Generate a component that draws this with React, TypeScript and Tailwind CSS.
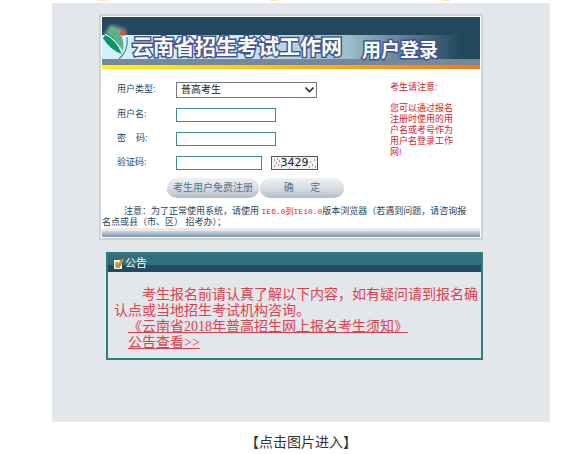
import React from "react";

const fieldClass =
  "h-[14px] border border-[#3f8a8a] bg-white px-1 text-[9px] leading-3 outline-none";
const labelClass = "w-[59px] whitespace-pre text-[#1d4560]";
const buttonClass =
  "h-5 rounded-full border-b border-[#b3bcc5] bg-linear-to-b from-[#eef1f4] via-[#d9dfe4] to-[#b9c2ca] text-[10px] leading-4 text-[#4d7391] whitespace-pre";
const bannerText =
  "font-bold text-[#fbfdf4] [-webkit-text-stroke:3px_#40539a] [paint-order:stroke_fill]";

function Logo() {
  return (
    <svg className="absolute left-0 top-[6px]" width="30" height="38" viewBox="0 0 30 38">
      <defs>
        <filter id="glow" x="-50%" y="-50%" width="200%" height="200%">
          <feGaussianBlur stdDeviation="2" />
        </filter>
      </defs>
      <path d="M2 12 L9 2 L24 7 L22 16 Z" fill="#fff" opacity="0.5" filter="url(#glow)" />
      <path d="M9 3 Q17 8 20 14 Q22 20 21 28 Q14 16 5 10Z" fill="#5fb088" />
      <path d="M1 15 L5 10 Q17 17 20 31 Q8 27 1 15Z" fill="#0a9468" />
      <path d="M3 11 Q15 17 20 30" fill="none" stroke="#e3f4ea" strokeWidth="1.2" />
      <path d="M25 14 Q27 27 17 36" fill="none" stroke="#4b8f93" strokeWidth="1.2" />
      <circle cx="21" cy="10" r="2.8" fill="#d9513a" />
    </svg>
  );
}

function Captcha() {
  return (
    <div className="relative ml-[9px] h-[14px] w-[47px] overflow-hidden border border-[#555] bg-[#f3f3f3] text-center font-['DejaVu_Sans',sans-serif] text-[11px] leading-3 text-[#222]">
      <svg className="absolute inset-0" width="45" height="12" viewBox="0 0 45 12">
        <path
          d="M2 3h1M5 2h1M4 6h1M7 4h1M2 9h1M6 8h1M9 10h1M11 2h1M17 11h1M20 1h1M25 10h1M38 5h1M40 8h1M42 3h1M37 10h1M43 10h1"
          stroke="#444"
        />
      </svg>
      3429
    </div>
  );
}

function LoginCard() {
  return (
    <form className="border-2 border-[#cfd1d3] bg-white p-px text-[9px]">
      <header className="relative">
        <div className="h-[18px] bg-[#23475c]"></div>
        <div className="flex h-6 items-center bg-linear-to-r from-[#d3f0fa] from-30% via-[#9dbfca] via-65% to-[#23475c] to-95% pl-[30px] leading-6">
          <h1 className={`text-[21px] ${bannerText}`}>云南省招生考试工作网</h1>
          <h2 className={`ml-5 mt-2 text-[19px] ${bannerText}`}>用户登录</h2>
        </div>
        <div className="h-[6px] bg-[#76899b]"></div>
        <div className="h-1 bg-linear-to-r from-[#fff21a] via-[#fdb913] to-[#f97316]"></div>
        <Logo />
      </header>
      <div className="flex justify-between pl-[15px] pr-6 pt-[13px]">
        <div>
          <div className="flex flex-col gap-[10px]">
            <div className="flex h-4 items-center">
              <label htmlFor="type" className={labelClass}>
                用户类型:
              </label>
              <div className="relative">
                <select
                  id="type"
                  className="block h-4 w-[141px] appearance-none border border-[#777] bg-white pl-1 text-[10px] leading-3 text-[#222]"
                >
                  <option>普高考生</option>
                </select>
                <svg className="pointer-events-none absolute right-[3px] top-[5px]" width="9" height="6" viewBox="0 0 9 6">
                  <path d="M0.5 0.5L4.5 4.5L8.5 0.5" fill="none" stroke="#333" strokeWidth="1.6" />
                </svg>
              </div>
            </div>
            <div className="flex items-center">
              <label htmlFor="user" className={labelClass}>
                用户名:
              </label>
              <input id="user" type="text" className={`w-[100px] ${fieldClass}`} />
            </div>
            <div className="flex items-center">
              <label htmlFor="pass" className={labelClass}>
                {"密    码:"}
              </label>
              <input id="pass" type="password" className={`w-[100px] ${fieldClass}`} />
            </div>
            <div className="flex items-center">
              <label htmlFor="code" className={labelClass}>
                验证码:
              </label>
              <input id="code" type="text" className={`w-[86px] ${fieldClass}`} />
              <Captcha />
            </div>
          </div>
          <div className="ml-[50px] mt-2 flex gap-px">
            <button type="button" className={`w-[92px] ${buttonClass}`}>
              考生用户免费注册
            </button>
            <button type="submit" className={`w-[84px] ${buttonClass}`}>
              {"确      定"}
            </button>
          </div>
        </div>
        <div className="w-[66px] leading-[11px] text-[#d8202c]">
          <p>考生请注意:</p>
          <p className="mt-[10px]">您可以通过报名注册时使用的用户名或考号作为用户名登录工作网!</p>
        </div>
      </div>
      <p className="mt-2 pr-3 indent-[22px] leading-[11px] text-[#1d4560]">
        注意：为了正常使用系统，请使用{" "}
        <span className="font-['Liberation_Mono','Noto_Sans_CJK_SC',monospace] text-[8px] text-[#f01818]">
          IE6.0到IE10.0
        </span>
        版本浏览器（若遇到问题，请咨询报名点或县（市、区） 招考办）；
      </p>
      <div className="h-[3px] bg-[#e9eaec]"></div>
      <div className="h-[6px] bg-linear-to-b from-[#c9d6e2] to-[#7d97ae]"></div>
    </form>
  );
}

function Notice() {
  return (
    <section className="ml-[7px] mt-3 border-2 border-[#2d7f80]">
      <header className="flex h-[18px] items-center bg-linear-to-b from-[#2f6f80] from-60% to-[#24485c] to-60% pl-[5px]">
        <svg width="12" height="13" viewBox="0 0 12 13">
          <path d="M1 3H9V12H1Z" fill="#fbf6c8" />
          <path d="M2.5 6H5M2.5 8H5M2.5 10H7" stroke="#3a4630" />
          <path d="M5 8L9.5 1L11.5 2.5L7 9Z" fill="#e69a22" stroke="#593b12" strokeWidth="0.5" />
        </svg>
        <h3 className="text-[11px] leading-4 text-white">公告</h3>
      </header>
      <div className="pb-[7px] pl-[6px] pr-px pt-[15px] font-['Liberation_Serif','Noto_Sans_CJK_SC',serif] text-sm leading-4 text-[#e0404a]">
        <p className="indent-7">考生报名前请认真了解以下内容，如有疑问请到报名确认点或当地招生考试机构咨询。</p>
        <a href="#" className="ml-[14px] block w-fit underline">
          《云南省2018年普高招生网上报名考生须知》
        </a>
        <a href="#" className="ml-[14px] block w-fit underline">
          公告查看&gt;&gt;
        </a>
      </div>
    </section>
  );
}

export default function App() {
  return (
    <div lang="zh-CN" className="bg-white pl-[52px] pr-[21px] font-['Liberation_Sans','Noto_Sans_CJK_SC',sans-serif]">
      <div className="flex h-[3px] justify-between pl-[46px] pr-[100px]">
        <span className="h-px w-2 bg-[#fde3c0]"></span>
        <span className="h-px w-2 bg-[#fde3c0]"></span>
        <span className="h-px w-2 bg-[#fde3c0]"></span>
      </div>
      <main className="bg-[#e3e6eb] pb-[62px] pl-[47px] pr-[67px] pt-[11px]">
        <LoginCard />
        <Notice />
      </main>
      <p className="pt-[10px] text-center text-sm leading-5 text-[#333]">【点击图片进入】</p>
    </div>
  );
}
